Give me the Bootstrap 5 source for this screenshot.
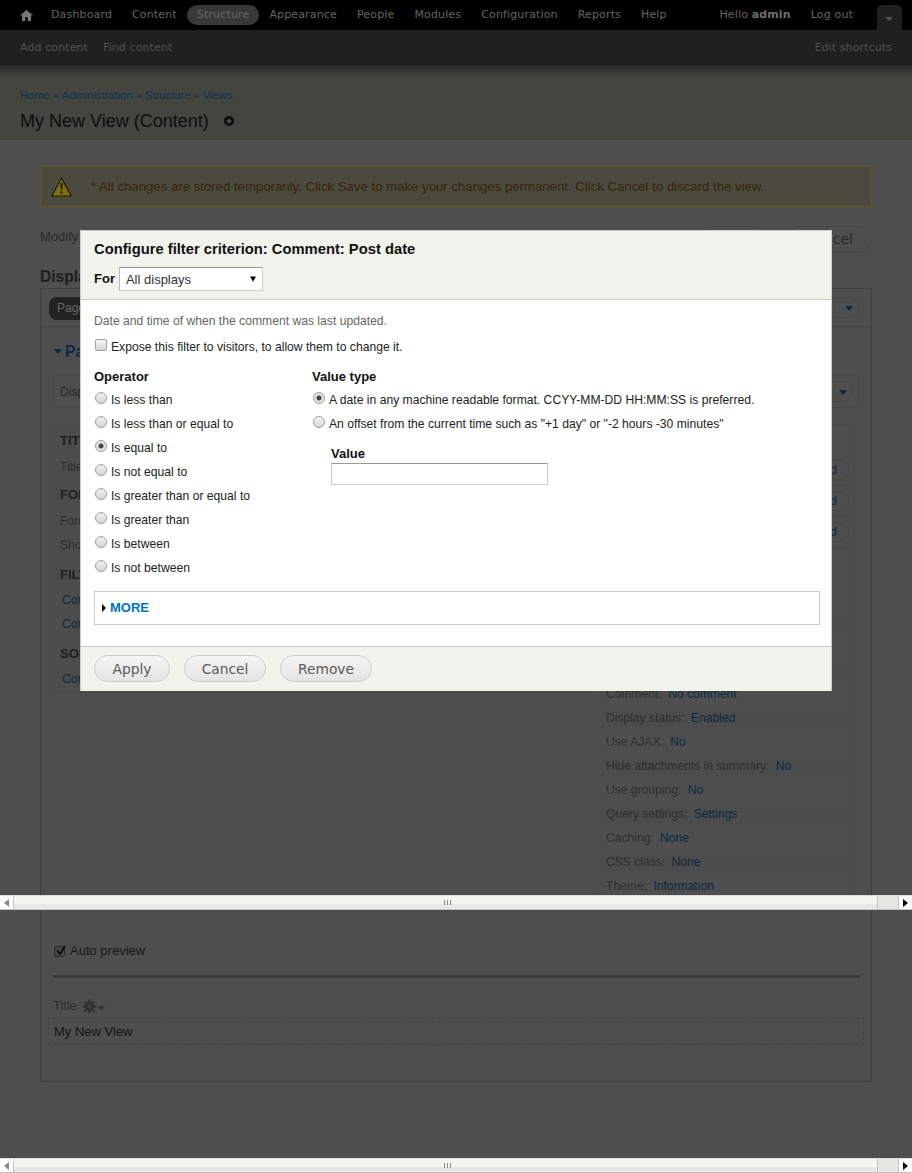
<!DOCTYPE html>
<html lang="en">
<head>
  <meta charset="UTF-8" />
  <meta name="viewport" content="width=device-width, initial-scale=1" />
  <title>My New View (Content)</title>
  <link href="https://cdn.jsdelivr.net/npm/bootstrap@5.3.2/dist/css/bootstrap.min.css" rel="stylesheet">
  <style>
    html, body { height: 1173px; overflow: hidden; }
    body { background: #4e4e4e; color: #222; font: 13px/18px "Liberation Sans", Arial, sans-serif; }
    .page-wrap { position: relative; height: 1173px; overflow: hidden; }
    a { text-decoration: none; color: #0a2a44; }

    /* toolbar */
    .tb-top { height: 30px; background: #000; padding-left: 10px; font: 11px/30px "DejaVu Sans", sans-serif; letter-spacing: .15px; }
    .tb-top .nav-link { color: #666; padding: 0 10px; height: 20px; line-height: 20px; margin-top: 5px; border-radius: 10px; }
    .tb-top .nav-item.is-on .nav-link { background: #383838; }
    .tb-home { width: 31px; padding-left: 10px !important; }
    .tb-hello { color: #666; padding: 5px 10px 0; line-height: 20px; }
    .tb-hello b { color: #6e6e6e; }
    .tb-toggle { width: 25px; height: 25px; margin: 5px 10px 0 14px; background: #202020; border-radius: 5px 5px 0 0; position: relative; }
    .tb-toggle::after { content: ""; position: absolute; left: 8px; top: 12px; border: 4px solid transparent; border-top: 4px solid #555; border-bottom: 0; }
    .tb-sub { height: 35px; background: #202020; padding: 0 20px; font: 11px/35px "DejaVu Sans", sans-serif; letter-spacing: .1px; color: #505050; gap: 15px; }

    /* head */
    .head-strip { height: 75px; padding: 21px 20px 0; background: linear-gradient(#272725 0, #44453e 13px, #44453e 100%); }
    .crumbs { font-size: 11.2px; line-height: 18px; color: #2a2a2a; }
    .crumbs a { color: #0b3452; }
    .view-title { font-size: 18px; line-height: 24px; font-weight: 400; color: #0e0e0e; margin: 5px 0 0; gap: 15px; }

    /* page */
    .main-pad { padding: 26px 40px 0 40px; }
    .warn-box { height: 41px; background: #4a4a3e; border: 1px solid #625a20; padding-left: 10px; color: #38230a; gap: 19px; font-size: 13.2px; }
    .modify-row { height: 27px; margin-top: 19px; color: #2a2a2a; }
    .modify-row > span:first-child { line-height: 20px; padding-top: 1px; }
    .pill-btn { height: 27px; border: 1px solid #474747; border-radius: 14px; padding: 0 18px; font: 14px/25px "DejaVu Sans", sans-serif; color: #2a2a2a; }
    .pill-save { width: 64px; }
    .pill-cancel { margin-left: 20px; }
    .disp-head { font-size: 15.6px; font-weight: 700; line-height: 20px; margin: 14px 0 1px; color: #1e1e1e; }
    .vw-panel { border: 1px solid #3f3f3f; height: 794px; }
    .vw-top { height: 38px; border-bottom: 1px solid #3f3f3f; padding: 8px 12px 0 8px; }
    .page-tab { height: 23px; width: 120px; border-radius: 8px; background: #222; color: #666; padding: 0 8px; line-height: 23px; font-size: 12px; }
    .dd-pill { height: 21px; border: 1px solid #474747; border-radius: 11px; width: 100px; position: relative; }
    .dd-pill::before { content: ""; position: absolute; right: 18px; top: 2px; height: 15px; border-left: 1px solid #474747; }
    .dd-pill::after { content: ""; position: absolute; right: 5px; top: 8px; border: 4.5px solid transparent; border-top: 5px solid #0a2a44; border-bottom: 0; }
    .sec-name { margin: 15px 0 0 12px; font-size: 15.6px; font-weight: 700; color: #0a2a44; line-height: 20px; }
    .sec-arrow { display: inline-block; border: 4.5px solid transparent; border-top: 5px solid #0a2a44; border-bottom: 0; margin: 0 3px 3px 1px; }
    .name-box { height: 33px; margin: 13px 12px 0; border: 1px solid #4a4a4a; padding: 0 5px 0 6px; color: #2a2a2a; font-size: 12.1px; }
    .vw-cols { margin: 16px 15px 0 12px; gap: 13px; }
    .vw-left { width: 533px; height: 269px; padding-top: 3px; border: 1px solid #4a4a4a; background: #4c4c4c; }
    .vw-right { width: 256px; height: 482px; padding-top: 30px; border: 1px solid #4a4a4a; }
    .vw-hd { height: 26px; line-height: 26px; padding-left: 6px; font-weight: 700; color: #1e1e1e; }
    .vw-hd.is-tall { height: 27px; }
    .vw-hd.gap-s { margin-top: 3px; }
    .vw-hd.gap-m { margin-top: 5px; }
    .vw-rw { height: 24px; line-height: 24px; padding-left: 6px; color: #2e2e2e; font-size: 12.1px; }
    .vw-rw a { margin-left: 3px; }
    .vw-left .vw-rw a { margin-left: 2px; }
    .vw-add { height: 31px; border-bottom: 1px solid #4a4a4a; padding: 5px 5px 0 6px; font-size: 12.1px; }
    .add-pill { height: 20px; width: 60px; line-height: 18px; border: 1px solid #474747; border-radius: 10px; text-align: right; padding-right: 11px; }
    .vw-rw:nth-child(even) { background: #4c4c4c; }
    .vw-gap { height: 38px; }
    .auto-row { margin: 36px 0 0 13px; height: 18px; color: #181818; gap: 5px; }
    .fake-check { width: 11px; height: 11px; border: 1px solid #2e2e2e; border-radius: 2px; background: #444; position: relative; }
    .fake-check svg { position: absolute; left: 0; top: -3px; }
    .prev-rule { height: 3px; background: #3b3b3b; margin: 15px 11px 0 12px; }
    .prev-title { margin: 18px 0 0 12px; color: #2e2e2e; height: 20px; gap: 5px; }
    .prev-box { margin: 1px 7px 0 7px; height: 28px; line-height: 28px; border: 1px dashed #434343; padding-left: 5px; color: #141414; }

    /* dialog */
    .cfg-dialog { position: absolute; left: 80px; top: 230px; width: 752px; height: 461px; background: #fff; border: 1px solid #ccc; font-size: 12.15px; color: #222; }
    .cfg-head { height: 69px; background: #f2f2ec; border-bottom: 1px solid #ccc; padding: 9px 13px 0; }
    .cfg-title { font-size: 14.75px; font-weight: 700; line-height: 18px; margin: 0 0 9px; color: #111; }
    .cfg-for { font-size: 13px; font-weight: 700; color: #111; gap: 4px; }
    .cfg-for .form-select { width: 144px; height: 24px; padding: 1px 6px 0; border-radius: 0; border: 1px solid #ccc; border-top-color: #999; border-left-color: #bbb; font: 13px/22px "Liberation Sans", sans-serif; color: #333; background-size: 6px 6px; background-position: right 6px center;
      background-image: url("data:image/svg+xml,%3csvg xmlns='http://www.w3.org/2000/svg' viewBox='0 0 8 7'%3e%3cpath d='M0 0h8L4 7z'/%3e%3c/svg%3e"); }
    .cfg-body { padding: 12px 11px 0 13px; height: 346px; }
    .cfg-desc { color: #666; line-height: 18px; }
    .cfg-line { height: 24px; line-height: 18px; padding-left: 17px; position: relative; margin: 0; }
    .cfg-line .form-check-input { position: absolute; left: 1px; top: 1px; margin: 0; width: 12px; height: 12px; border: 1px solid #a0a0a0; background-color: #e8e8e8; background-image: linear-gradient(#f4f4f4, #d6d6d6); box-shadow: none; }
    .cfg-line .form-check-input[type=checkbox] { border-radius: 2px; }
    .cfg-line .form-check-input:checked { background-image: radial-gradient(circle, #444 0 2px, #e2e2e2 3px); }
    .cfg-expose { margin-top: 8px !important; }
    .cfg-cols { margin-top: 6px; }
    .cfg-op { width: 218px; }
    .cfg-lab { font-size: 13px; font-weight: 700; line-height: 18px; margin-bottom: 5px; color: #111; }
    .cfg-val { margin: 6px 0 0 19px; }
    .cfg-val .cfg-lab { margin-bottom: 0; }
    .cfg-val input { width: 217px; height: 22px; border: 1px solid #ccc; border-top-color: #999; border-radius: 0; padding: 0 4px; display: block; }
    .cfg-more { height: 34px; margin-top: 8px; border: 1px solid #ccc; padding-left: 7px; gap: 4px; }
    .cfg-more a { color: #0074bd; font-size: 13px; font-weight: 700; }
    .more-arrow { border: 4px solid transparent; border-left: 4px solid #000; border-right: 0; }
    .cfg-foot { height: 45px; background: #f2f2ec; border-top: 1px solid #ccc; padding: 8px 13px 0; gap: 14px; }
    .cfg-btn { height: 27px; border: 1px solid #ccc; border-radius: 14px; text-align: center; background: linear-gradient(#f4f4f4, #e4e4e4); font: 13.8px/26px "DejaVu Sans", sans-serif; color: #5a5a5a; }
    .btn-apply { width: 76px; }
    .btn-cancel { width: 82px; }
    .btn-remove { width: 92px; }

    /* browser scrollbars */
    .hbar { position: absolute; left: 0; width: 912px; height: 15px; background: linear-gradient(#f4f4f2 0 8px, #e8e8e6 8px); border-top: 1px solid #ddd; border-bottom: 1px solid #c4c4c4; display: flex; }
    .hbar-btn { width: 14px; height: 13px; background: #fff; display: flex; align-items: center; justify-content: center; border-right: 1px solid #c4c4c4; }
    .hbar-btn.end { border-right: 0; border-left: 1px solid #c4c4c4; }
    .hbar-thumb { width: 864px; padding-left: 3px; display: flex; align-items: center; justify-content: center; gap: 2px; border-right: 1px solid #c4c4c4; }
    .hbar-thumb i { width: 1px; height: 5px; background: #888; }
    .hbar-rest { width: 20px; background: #e6e6e4; }
  </style>
</head>
<body>
<div class="page-wrap">

  <div class="tb-top d-flex">
    <ul class="nav flex-nowrap">
      <li class="nav-item"><a class="nav-link tb-home" href="#"><svg width="13" height="11" viewBox="0 0 13 11"><path fill="#777" d="M6.5 0 13 5.6h-2V11H7.8V7.3H5.2V11H2V5.6H0z"/></svg></a></li>
      <li class="nav-item"><a class="nav-link" href="#">Dashboard</a></li>
      <li class="nav-item"><a class="nav-link" href="#">Content</a></li>
      <li class="nav-item is-on"><a class="nav-link" href="#">Structure</a></li>
      <li class="nav-item"><a class="nav-link" href="#">Appearance</a></li>
      <li class="nav-item"><a class="nav-link" href="#">People</a></li>
      <li class="nav-item"><a class="nav-link" href="#">Modules</a></li>
      <li class="nav-item"><a class="nav-link" href="#">Configuration</a></li>
      <li class="nav-item"><a class="nav-link" href="#">Reports</a></li>
      <li class="nav-item"><a class="nav-link" href="#">Help</a></li>
    </ul>
    <div class="ms-auto d-flex">
      <div class="tb-hello">Hello <b>admin</b></div>
      <div class="tb-hello">Log out</div>
      <div class="tb-toggle"></div>
    </div>
  </div>
  <div class="tb-sub d-flex">
    <span>Add content</span>
    <span>Find content</span>
    <span class="ms-auto">Edit shortcuts</span>
  </div>

  <div class="head-strip">
    <div class="crumbs"><a href="#">Home</a> » <a href="#">Administration</a> » <a href="#">Structure</a> » <a href="#">Views</a></div>
    <h1 class="view-title d-flex align-items-center">My New View (Content)
      <svg width="10" height="10" viewBox="0 0 10 10"><circle cx="5" cy="5" r="5" fill="#0d0d0d"/><path d="M2.5 5h5M5 2.5v5" stroke="#555" stroke-width="1.6"/></svg>
    </h1>
  </div>

  <div class="main-pad">
    <div class="warn-box d-flex align-items-center">
      <svg width="21" height="20" viewBox="0 0 21 20"><path d="M10.5 1 20.3 19H.7z" fill="#7d6e10" stroke="#1d1a08" stroke-width="1.2" stroke-linejoin="round"/><path d="M9.4 6h2.2l-.4 7H9.8zM9.5 14.500h2v2h-2z" fill="#15130a"/></svg>
      <span>* All changes are stored temporarily. Click Save to make your changes permanent. Click Cancel to discard the view.</span>
    </div>

    <div class="modify-row d-flex align-items-start">
      <span>Modify</span>
      <span class="pill-btn pill-save ms-auto"></span>
      <span class="pill-btn pill-cancel">Cancel</span>
    </div>

    <div class="disp-head">Display</div>
    <div class="vw-panel">
      <div class="vw-top d-flex justify-content-between">
        <div class="page-tab">Page</div>
        <div class="dd-pill"></div>
      </div>
      <div class="sec-name"><span class="sec-arrow"></span>Page</div>
      <div class="name-box d-flex align-items-center justify-content-between">
        <span>Display</span>
        <div class="dd-pill"></div>
      </div>
      <div class="vw-cols d-flex align-items-start">
        <div class="vw-left">
          <div class="vw-hd is-tall">TITLE</div>
          <div class="vw-rw">Title:</div>
          <div class="vw-hd is-tall gap-s">FORMAT</div>
          <div class="vw-rw">Format:</div>
          <div class="vw-rw">Show:</div>
          <div class="vw-hd gap-m">FILTER</div>
          <div class="vw-rw"><a href="#">Content:</a></div>
          <div class="vw-rw"><a href="#">Comment:</a></div>
          <div class="vw-hd gap-m">SORT</div>
          <div class="vw-rw"><a href="#">Content:</a></div>
        </div>
        <div class="vw-right">
          <div class="vw-add d-flex justify-content-end"><a class="add-pill" href="#">Add</a></div>
          <div class="vw-add d-flex justify-content-end"><a class="add-pill" href="#">Add</a></div>
          <div class="vw-add d-flex justify-content-end"><a class="add-pill" href="#">Add</a></div>
          <div class="vw-gap"></div>
          <div class="vw-rw"></div>
          <div class="vw-rw"></div>
          <div class="vw-rw"></div>
          <div class="vw-rw"></div>
          <div class="vw-rw">Comment: <a href="#">No comment</a></div>
          <div class="vw-rw">Display status: <a href="#">Enabled</a></div>
          <div class="vw-rw">Use AJAX: <a href="#">No</a></div>
          <div class="vw-rw">Hide attachments in summary: <a href="#">No</a></div>
          <div class="vw-rw">Use grouping: <a href="#">No</a></div>
          <div class="vw-rw">Query settings: <a href="#">Settings</a></div>
          <div class="vw-rw">Caching: <a href="#">None</a></div>
          <div class="vw-rw">CSS class: <a href="#">None</a></div>
          <div class="vw-rw">Theme: <a href="#">Information</a></div>
        </div>
      </div>
      <div class="auto-row d-flex align-items-center">
        <span class="fake-check"><svg width="12" height="13" viewBox="0 0 12 13"><path d="M2 6.500 5 10 10 2" fill="none" stroke="#0c0c0c" stroke-width="1.8"/></svg></span>
        <span>Auto preview</span>
      </div>
      <div class="prev-rule"></div>
      <div class="prev-title d-flex align-items-center">
        <span>Title</span>
        <svg width="24" height="15" viewBox="0 0 24 15"><g fill="none" stroke="#333"><circle cx="7.500" cy="7.500" r="3" stroke-width="3.400"/><path stroke-width="2.400" d="M7.500.5v3M7.500 11.500v3M.5 7.500h3M11.500 7.500h3M2.500 2.500l2 2M10.500 10.500l2 2M12.500 2.500l-2 2M4.500 10.500l-2 2"/></g><path d="M16 7h7l-3.500 4.500z" fill="#333"/></svg>
      </div>
      <div class="prev-box">My New View</div>
    </div>
  </div>

  <div class="cfg-dialog">
    <div class="cfg-head">
      <h2 class="cfg-title">Configure filter criterion: Comment: Post date</h2>
      <div class="cfg-for d-flex align-items-center">
        <span>For</span>
        <select class="form-select"><option>All displays</option></select>
      </div>
    </div>
    <div class="cfg-body">
      <div class="cfg-desc">Date and time of when the comment was last updated.</div>
      <label class="cfg-line d-block cfg-expose"><input class="form-check-input" type="checkbox">Expose this filter to visitors, to allow them to change it.</label>
      <div class="cfg-cols d-flex">
        <div class="cfg-op">
          <div class="cfg-lab">Operator</div>
          <label class="cfg-line d-block"><input class="form-check-input" type="radio" name="op">Is less than</label>
          <label class="cfg-line d-block"><input class="form-check-input" type="radio" name="op">Is less than or equal to</label>
          <label class="cfg-line d-block"><input class="form-check-input" type="radio" name="op" checked>Is equal to</label>
          <label class="cfg-line d-block"><input class="form-check-input" type="radio" name="op">Is not equal to</label>
          <label class="cfg-line d-block"><input class="form-check-input" type="radio" name="op">Is greater than or equal to</label>
          <label class="cfg-line d-block"><input class="form-check-input" type="radio" name="op">Is greater than</label>
          <label class="cfg-line d-block"><input class="form-check-input" type="radio" name="op">Is between</label>
          <label class="cfg-line d-block"><input class="form-check-input" type="radio" name="op">Is not between</label>
        </div>
        <div class="flex-grow-1">
          <div class="cfg-lab">Value type</div>
          <label class="cfg-line d-block"><input class="form-check-input" type="radio" name="vt" checked>A date in any machine readable format. CCYY-MM-DD HH:MM:SS is preferred.</label>
          <label class="cfg-line d-block"><input class="form-check-input" type="radio" name="vt">An offset from the current time such as "+1 day" or "-2 hours -30 minutes"</label>
          <div class="cfg-val">
            <div class="cfg-lab">Value</div>
            <input type="text" class="form-control">
          </div>
        </div>
      </div>
      <div class="cfg-more d-flex align-items-center">
        <span class="more-arrow"></span><a href="#">MORE</a>
      </div>
    </div>
    <div class="cfg-foot d-flex align-items-start">
      <span class="cfg-btn btn-apply">Apply</span>
      <span class="cfg-btn btn-cancel">Cancel</span>
      <span class="cfg-btn btn-remove">Remove</span>
    </div>
  </div>

  <div class="hbar" style="top: 895px">
    <span class="hbar-btn"><svg width="5" height="8" viewBox="0 0 5 8"><path d="M5 0v8L0 4z" fill="#888"/></svg></span>
    <span class="hbar-thumb"><i></i><i></i><i></i></span>
    <span class="hbar-rest"></span>
    <span class="hbar-btn end"><svg width="5" height="8" viewBox="0 0 5 8"><path d="M0 0v8l5-4z" fill="#000"/></svg></span>
  </div>
  <div class="hbar" style="top: 1158px">
    <span class="hbar-btn"><svg width="5" height="8" viewBox="0 0 5 8"><path d="M5 0v8L0 4z" fill="#888"/></svg></span>
    <span class="hbar-thumb"><i></i><i></i><i></i></span>
    <span class="hbar-rest"></span>
    <span class="hbar-btn end"><svg width="5" height="8" viewBox="0 0 5 8"><path d="M0 0v8l5-4z" fill="#000"/></svg></span>
  </div>
</div>
<script src="https://cdn.jsdelivr.net/npm/bootstrap@5.3.2/dist/js/bootstrap.bundle.min.js"></script>
</body>
</html>
